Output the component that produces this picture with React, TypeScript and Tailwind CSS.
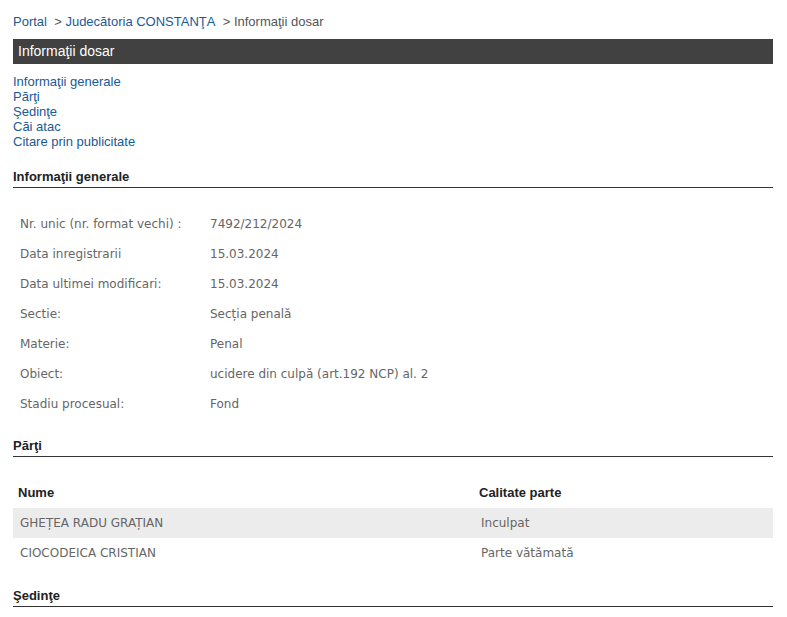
import React from "react";

const generalInfo: [string, string][] = [
  ["Nr. unic (nr. format vechi) :", "7492/212/2024"],
  ["Data inregistrarii", "15.03.2024"],
  ["Data ultimei modificari:", "15.03.2024"],
  ["Sectie:", "Secția penală"],
  ["Materie:", "Penal"],
  ["Obiect:", "ucidere din culpă (art.192 NCP) al. 2"],
  ["Stadiu procesual:", "Fond"],
];

const parti = [
  { nume: "GHEȚEA RADU GRAȚIAN", calitate: "Inculpat" },
  { nume: "CIOCODEICA CRISTIAN", calitate: "Parte vătămată" },
];

const links = [
  "Informaţii generale",
  "Părţi",
  "Şedinţe",
  "Căi atac",
  "Citare prin publicitate",
];

function SectionTitle({ title, className }: { title: string; className?: string }) {
  return (
    <div
      className={`border-b border-[#333333] pb-[3px] text-[13px] leading-[15px] font-bold text-[#222222] ${className ?? ""}`}
    >
      {title}
    </div>
  );
}

export default function App() {
  return (
    <div className="min-h-screen w-full bg-white font-['Liberation_Sans',Arial,sans-serif]">
      <div className="ml-[13px] w-[760px] pt-[14px]">
        {/* breadcrumb */}
        <div className="text-[13px] leading-[15px] text-[#555555]">
          <span className="text-[#1a5a96]">Portal</span>
          {"\u00a0 > "}
          <span className="text-[#1a5a96]">Judecătoria CONSTANŢA</span>
          {"\u00a0 > "}
          <span>Informaţii dosar</span>
        </div>

        <div className="mt-[10px] h-[25px] bg-[#424141] pl-[5px] text-[14px] leading-[25px] text-white">
          Informaţii dosar
        </div>

        <div className="mt-[10px] flex flex-col text-[13px] leading-[15px] text-[#1a5a96]">
          {links.map((l) => (
            <span key={l}>{l}</span>
          ))}
        </div>

        <SectionTitle title="Informaţii generale" className="mt-[20px]" />

        <div className="mt-[21px] font-['DejaVu_Sans',Verdana,sans-serif] text-[12px] text-[#666666]">
          {generalInfo.map(([label, value]) => (
            <div key={label} className="flex h-[30px] items-center">
              <span className="w-[197px] pl-[7px]">{label}</span>
              <span>{value}</span>
            </div>
          ))}
        </div>

        <SectionTitle title="Părţi" className="mt-[19px]" />

        <div className="mt-[21px]">
          <div className="flex h-[30px] items-center text-[13px] font-bold text-[#222222]">
            <span className="w-[461px] pl-[5px]">Nume</span>
            <span className="pl-[5px]">Calitate parte</span>
          </div>
          {parti.map((p, i) => (
            <div
              key={p.nume}
              className={`flex h-[30px] items-center font-['DejaVu_Sans',Verdana,sans-serif] text-[12px] text-[#666666] ${
                i === 0 ? "bg-[#ececec]" : ""
              }`}
            >
              <span className="w-[461px] pl-[7px]">{p.nume}</span>
              <span className="pl-[7px]">{p.calitate}</span>
            </div>
          ))}
        </div>

        <SectionTitle title="Şedinţe" className="mt-[20px]" />
      </div>
    </div>
  );
}
